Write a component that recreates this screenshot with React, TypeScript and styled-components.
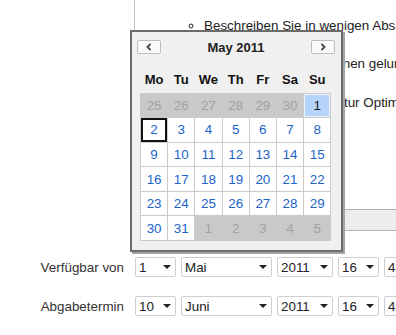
import React from "react";
import styled, { createGlobalStyle, css } from "styled-components";

const GlobalStyle = createGlobalStyle`
  html, body { margin: 0; padding: 0; background: #fff; }
  body {
    font-family: "Liberation Sans", Arial, sans-serif;
    font-size: 13.4px;
    color: #333;
  }
`;

const Page = styled.div`
  position: relative;
  width: 396px;
  height: 335px;
  overflow: hidden;
  background: #fff;
`;

const EditorRow = styled.div`
  display: grid;
  grid-template-columns: 134px 420px;
`;

const Editor = styled.div`
  border-left: 1px solid #c4c4c4;
  border-bottom: 1px solid #b4b4b4;
  display: flex;
  flex-direction: column;
`;

const EditorBody = styled.div`
  height: 209px;
  box-sizing: border-box;
  padding-top: 17.7px;
`;

const Bullets = styled.ul`
  margin: 0;
  padding: 0 0 0 69px;
  list-style-type: circle;
  color: #222;

  li {
    line-height: 16px;
    height: 16px;
    margin-bottom: 22.7px;
    white-space: nowrap;
  }
`;

const StatusBar = styled.div`
  height: 20px;
  border-top: 1px solid #b0b0b0;
  background: #ededed;
`;

const FieldRow = styled.div<{ $top: number }>`
  display: grid;
  grid-template-columns: 134px auto;
  align-items: center;
  margin-top: ${(p) => p.$top}px;
  height: 20px;
`;

const Label = styled.label`
  text-align: right;
  padding-right: 10px;
  color: #333;
  white-space: nowrap;
`;

const Selects = styled.div`
  display: flex;
  gap: 5px;
  padding-left: 1px;
  flex-wrap: nowrap;
`;

const SelectWrap = styled.span<{ $w: number }>`
  position: relative;
  display: inline-block;
  flex: 0 0 ${(p) => p.$w}px;
  width: ${(p) => p.$w}px;
  height: 20px;

  &::after {
    content: "";
    position: absolute;
    right: 5px;
    top: 8px;
    border-left: 4px solid transparent;
    border-right: 4px solid transparent;
    border-top: 4px solid #222;
    pointer-events: none;
  }
`;

const Select = styled.select`
  appearance: none;
  -webkit-appearance: none;
  box-sizing: border-box;
  width: 100%;
  height: 20px;
  margin: 0;
  padding: 0 0 0 3px;
  border: 1px solid #cfcfcf;
  border-radius: 2px;
  background: #fff;
  font-family: "Liberation Sans", Arial, sans-serif;
  font-size: 13.4px;
  color: #222;
  outline: none;
`;

/* ---------- calendar popup ---------- */

const Calendar = styled.div`
  position: absolute;
  left: 130px;
  top: 30px;
  width: 209px;
  border: 2px solid #6b6b6b;
  box-shadow: 2px 2px 0 #a3a3a3;
  background: #f0f0f0;
  padding-bottom: 9px;
`;

const CalHeader = styled.div`
  display: flex;
  align-items: center;
  justify-content: space-between;
  height: 14px;
  margin: 8px 6px 0 5px;
`;

const NavButton = styled.button`
  box-sizing: border-box;
  width: 24px;
  height: 14px;
  padding: 0;
  margin: 0;
  border: 1px solid #bdbdbd;
  border-radius: 2px;
  background: #fafafa;
  display: flex;
  align-items: center;
  justify-content: center;
`;

const Title = styled.div`
  font-weight: bold;
  color: #222;
  font-size: 13px;
`;

const columns = css`
  display: grid;
  grid-template-columns: repeat(7, 26.2px);
  column-gap: 1px;
`;

const DayNames = styled.div`
  ${columns};
  margin: 17px 0 0 8px;
  padding: 0 1px;
  height: 17px;
  align-items: center;
`;

const DayName = styled.div`
  text-align: center;
  font-weight: bold;
  color: #111;
  font-size: 13px;
`;

const Grid = styled.div`
  ${columns};
  grid-template-rows: repeat(6, 23.6px);
  row-gap: 1px;
  margin: 4.5px 0 0 8px;
  padding: 1px;
  width: max-content;
  background: #cbcbcb;
`;

type Kind = "other" | "normal" | "today" | "selected";

const Day = styled.div<{ $kind: Kind }>`
  display: flex;
  align-items: center;
  justify-content: center;
  font-size: 13.4px;
  background: #fff;
  color: #2164c8;
  ${(p) =>
    p.$kind === "other" &&
    css`
      background: #c9c9c9;
      color: #a2a2a2;
    `}
  ${(p) =>
    p.$kind === "today" &&
    css`
      background: #b6d4fb;
      color: #1a1a1a;
      box-shadow: inset 0 0 0 1px #eaf2fd;
    `}
  ${(p) =>
    p.$kind === "selected" &&
    css`
      box-shadow: inset 0 0 0 2px #111;
    `}
`;

const Chevron = ({ dir }: { dir: "left" | "right" }) => (
  <svg width="6" height="8" viewBox="0 0 6 8" aria-hidden="true">
    <polyline
      points={dir === "left" ? "4.6,0.8 1.4,4 4.6,7.2" : "1.4,0.8 4.6,4 1.4,7.2"}
      fill="none"
      stroke="#444"
      strokeWidth="1.8"
    />
  </svg>
);

const dayNames = ["Mo", "Tu", "We", "Th", "Fr", "Sa", "Su"];

type Cell = { n: number; kind: Kind };

const buildCells = (): Cell[] => {
  const cells: Cell[] = [];
  for (let n = 25; n <= 30; n++) cells.push({ n, kind: "other" });
  for (let n = 1; n <= 31; n++)
    cells.push({ n, kind: n === 1 ? "today" : n === 2 ? "selected" : "normal" });
  for (let n = 1; n <= 5; n++) cells.push({ n, kind: "other" });
  return cells;
};

const DateSelects = ({ day, month }: { day: string; month: string }) => (
  <Selects>
    <SelectWrap $w={41}>
      <Select defaultValue={day}>
        <option>{day}</option>
      </Select>
    </SelectWrap>
    <SelectWrap $w={91}>
      <Select defaultValue={month}>
        <option>{month}</option>
      </Select>
    </SelectWrap>
    <SelectWrap $w={56}>
      <Select defaultValue="2011">
        <option>2011</option>
      </Select>
    </SelectWrap>
    <SelectWrap $w={41}>
      <Select defaultValue="16">
        <option>16</option>
      </Select>
    </SelectWrap>
    <SelectWrap $w={41}>
      <Select defaultValue="45">
        <option>45</option>
      </Select>
    </SelectWrap>
  </Selects>
);

export default function App() {
  const cells = buildCells();
  return (
    <Page>
      <GlobalStyle />
      <EditorRow>
        <div />
        <Editor>
          <EditorBody>
            <Bullets>
              <li>Beschreiben Sie in wenigen Absätzen Ihr Projekt</li>
              <li>Welche Teilziele sind Ihnen gelungen?</li>
              <li>Vorschläge zur Architektur Optimierung</li>
            </Bullets>
          </EditorBody>
          <StatusBar />
        </Editor>
      </EditorRow>

      <FieldRow $top={26}>
        <Label>Verfügbar von</Label>
        <DateSelects day="1" month="Mai" />
      </FieldRow>
      <FieldRow $top={19}>
        <Label>Abgabetermin</Label>
        <DateSelects day="10" month="Juni" />
      </FieldRow>

      <Calendar>
        <CalHeader>
          <NavButton type="button" aria-label="previous month">
            <Chevron dir="left" />
          </NavButton>
          <Title>May 2011</Title>
          <NavButton type="button" aria-label="next month">
            <Chevron dir="right" />
          </NavButton>
        </CalHeader>
        <DayNames>
          {dayNames.map((d) => (
            <DayName key={d}>{d}</DayName>
          ))}
        </DayNames>
        <Grid>
          {cells.map((c, i) => (
            <Day key={i} $kind={c.kind}>
              {c.n}
            </Day>
          ))}
        </Grid>
      </Calendar>
    </Page>
  );
}
